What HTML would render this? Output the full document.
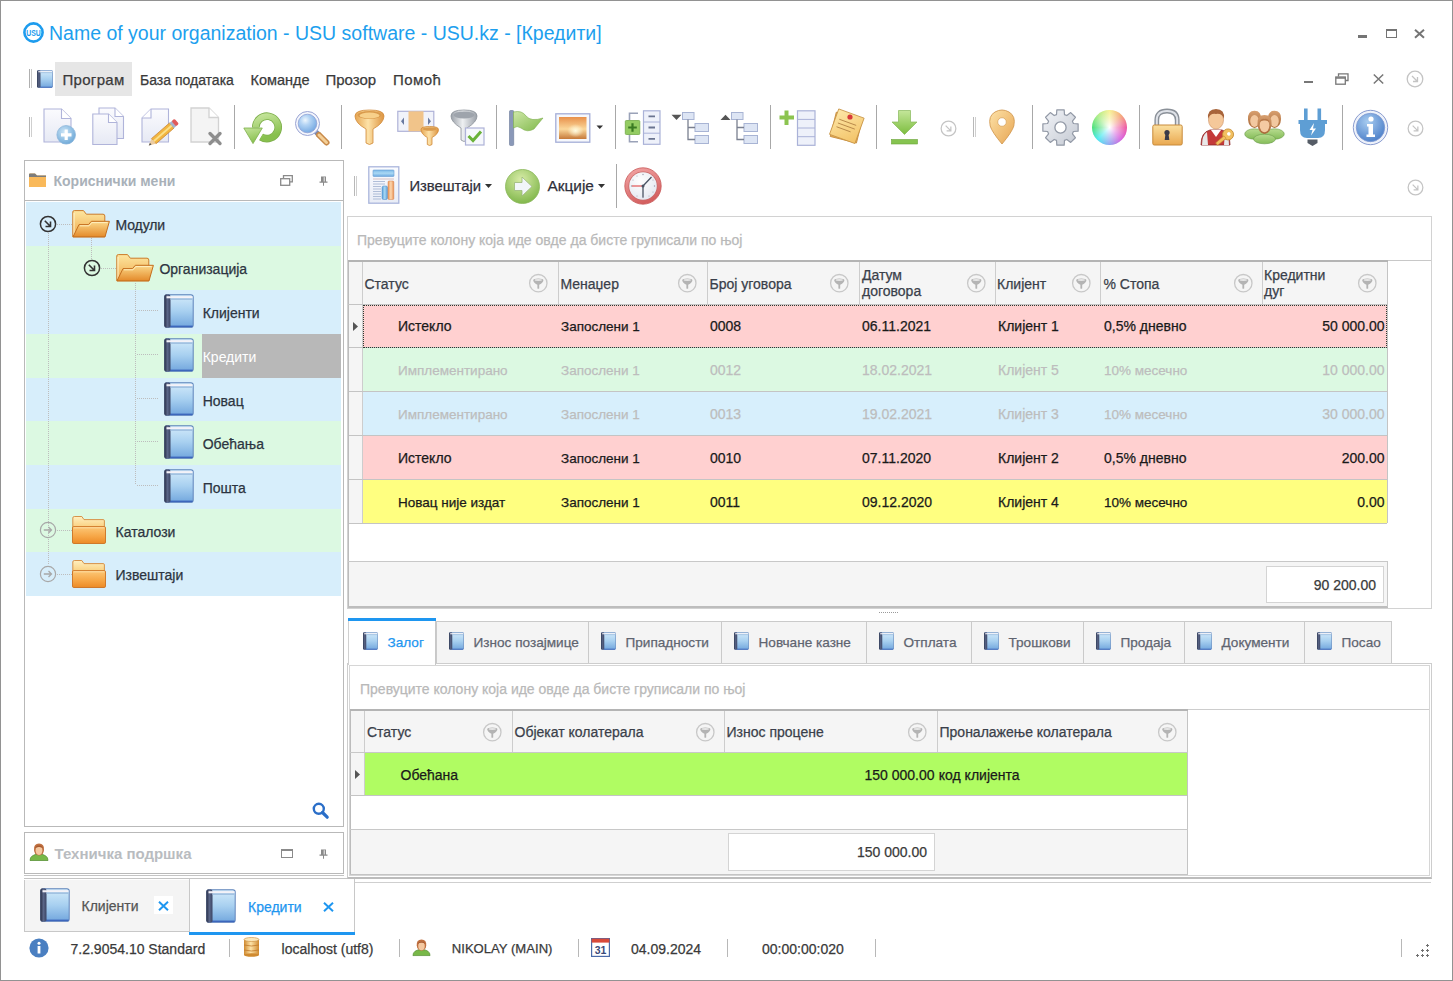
<!DOCTYPE html>
<html><head><meta charset="utf-8">
<style>
*{margin:0;padding:0;box-sizing:border-box}
html,body{width:1453px;height:981px;overflow:hidden;background:#fff}
body{position:relative;font-family:"Liberation Sans",sans-serif;font-size:14px;color:#333}
.a{position:absolute}
.t{position:absolute;white-space:nowrap;line-height:1;-webkit-text-stroke:0.25px currentColor}
.hl{position:absolute;height:1px}
.vl{position:absolute;width:1px}
svg.i{position:absolute;overflow:visible}
</style></head><body>
<svg width="0" height="0" style="position:absolute">
<defs>
 <linearGradient id="gBook" x1="0" y1="0" x2="0" y2="1">
  <stop offset="0" stop-color="#d2eafa"/><stop offset="0.5" stop-color="#a8d0f0"/><stop offset="1" stop-color="#74a8de"/>
 </linearGradient>
 <linearGradient id="gSpine" x1="0" y1="0" x2="1" y2="0">
  <stop offset="0" stop-color="#262c44"/><stop offset="0.5" stop-color="#5a6688"/><stop offset="1" stop-color="#3a4464"/>
 </linearGradient>
 <linearGradient id="gFold" x1="0" y1="0" x2="0" y2="1">
  <stop offset="0" stop-color="#fde6a0"/><stop offset="1" stop-color="#f0a94a"/>
 </linearGradient>
 <linearGradient id="gFoldF" x1="0" y1="0" x2="0" y2="1">
  <stop offset="0" stop-color="#fbd98a"/><stop offset="1" stop-color="#e48a2a"/>
 </linearGradient>
 <linearGradient id="gFoldC" x1="0" y1="0" x2="0" y2="1">
  <stop offset="0" stop-color="#fcc878"/><stop offset="0.55" stop-color="#f7a848"/><stop offset="1" stop-color="#ec8a26"/>
 </linearGradient>
 <linearGradient id="gFoldB" x1="0" y1="0" x2="0" y2="1">
  <stop offset="0" stop-color="#fff0c0"/><stop offset="1" stop-color="#f8c870"/>
 </linearGradient>
 <symbol id="book" viewBox="0 0 30 34" preserveAspectRatio="none">
  <rect x="0.3" y="0.3" width="29.4" height="33.4" rx="2.8" fill="#5c82ba"/>
  <rect x="1.3" y="1.3" width="27.4" height="31.4" rx="1.8" fill="url(#gBook)"/>
  <rect x="6" y="31.6" width="22.5" height="1.6" fill="#3c66bc"/>
  <rect x="0.3" y="0.3" width="6.2" height="33.4" rx="2.5" fill="url(#gSpine)"/>
  <rect x="2.5" y="2.2" width="26" height="2.1" fill="#f4f2f8"/>
  <rect x="6.5" y="4.3" width="22" height="1.6" fill="#9ebedf"/>
 </symbol>
 <symbol id="folderOpen" viewBox="0 0 38 28">
  <path d="M0.8 2 Q0.8 0.6 2.3 0.6 H11.5 L14.3 4.2 H31 Q32.8 4.2 32.8 6 V26.8 H0.8 Z" fill="url(#gFold)" stroke="#cc7a28" stroke-width="1"/>
  <path d="M2 3 V25" stroke="#fff6d0" stroke-width="1"/>
  <path d="M7 14.6 H16.5 L19.3 11.3 H37.4 L33 26.9 H1 Z" fill="url(#gFoldF)" stroke="#c46e1e" stroke-width="1" stroke-linejoin="round"/>
  <path d="M8 15.8 H17 L19.8 12.6 H35.6" fill="none" stroke="#fff0c0" stroke-width="1"/>
 </symbol>
 <symbol id="folderClosed" viewBox="0 0 34 28">
  <path d="M0.8 2 Q0.8 0.5 2.3 0.5 H9.8 L12 3.6 H31.2 Q32.4 3.6 32.4 4.8 V14 H0.8 Z" fill="url(#gFoldB)" stroke="#d4883a" stroke-width="0.9"/>
  <rect x="0.5" y="10.6" width="33" height="16.9" rx="1.3" fill="url(#gFoldC)" stroke="#cc7020" stroke-width="0.9"/>
  <path d="M1.5 11.8 H32.5" stroke="#ffe0a8" stroke-width="0.9"/>
 </symbol>
 <symbol id="filt" viewBox="0 0 20 20">
  <circle cx="10.3" cy="10.2" r="8.7" fill="none" stroke="#c8c8c8" stroke-width="1.3"/>
  <path d="M5.2 7.2 Q5.2 5.6 10.3 5.6 Q15.4 5.6 15.4 7.2 Q15.4 9.4 11.2 11.8 V15.4 Q10.3 16.2 9.4 15.4 V11.8 Q5.2 9.4 5.2 7.2 Z" fill="#b4b4b4"/>
  <ellipse cx="10.3" cy="7" rx="3.6" ry="0.9" fill="#e6e6e6"/>
 </symbol>
 <symbol id="expC" viewBox="0 0 18 18">
  <circle cx="9" cy="9" r="7.6" fill="none" stroke="#333" stroke-width="1.5"/>
  <path d="M5.8 5.8 L11.5 11.5 M6.5 11.5 H11.5 V6.5" fill="none" stroke="#333" stroke-width="1.6"/>
 </symbol>
 <symbol id="colC" viewBox="0 0 18 18">
  <circle cx="9" cy="9" r="7.6" fill="none" stroke="#a8a8a8" stroke-width="1.2"/>
  <path d="M4.8 9 H12.5 M9.5 6 L12.5 9 L9.5 12" fill="none" stroke="#a8a8a8" stroke-width="1.3"/>
 </symbol>
 <symbol id="smallC" viewBox="0 0 18 18">
  <circle cx="9" cy="9" r="7.8" fill="none" stroke="#c4c4c4" stroke-width="1.3"/>
  <path d="M6 6 L11.5 11.5 M7 11.5 H11.5 V7" fill="none" stroke="#c4c4c4" stroke-width="1.3"/>
 </symbol>
</defs>
</svg>

<!-- window border -->
<div class="a" style="left:0;top:0;width:1453px;height:981px;border:1px solid #929292"></div>

<!-- ===== TITLE BAR ===== -->
<svg class="i" style="left:23px;top:22px" width="21" height="21" viewBox="0 0 21 21">
 <circle cx="10.5" cy="10.5" r="9.1" fill="none" stroke="#1d9cee" stroke-width="2.6"/>
 <text x="10.5" y="13.6" font-family="Liberation Sans" font-size="8.6" font-weight="700" fill="#1d9cee" text-anchor="middle" textLength="14.5" lengthAdjust="spacingAndGlyphs">USU</text>
</svg>
<div class="t" style="left:49px;top:23.5px;font-size:19.5px;color:#1d9fee;-webkit-text-stroke:0">Name of your organization - USU software - USU.kz - [Кредити]</div>
<div class="a" style="left:1358px;top:35px;width:9px;height:2.5px;background:#747474"></div>
<div class="a" style="left:1385.5px;top:29px;width:11px;height:8.5px;border:1.4px solid #747474;border-top-width:2.2px"></div>
<svg class="i" style="left:1414px;top:28.5px" width="11" height="9.5" viewBox="0 0 11 9.5"><path d="M1 0.8 L10 8.7 M10 0.8 L1 8.7" stroke="#747474" stroke-width="2"/></svg>

<!-- ===== MENU BAR ===== -->
<div class="a" style="left:29px;top:69px;width:1px;height:19px;background:#b0b0b0"></div>
<div class="a" style="left:31px;top:69px;width:1px;height:19px;background:#c8c8c8"></div>
<svg class="i" style="left:37px;top:70px" width="16" height="18"><use href="#book"/></svg>
<div class="a" style="left:55px;top:62px;width:77px;height:34px;background:#e6e6e6"></div>
<div class="t" style="left:62.5px;top:72px;font-size:15px;letter-spacing:0.3px;color:#3a3a3a">Програм</div>
<div class="t" style="left:140px;top:72.5px;font-size:14px;color:#3a3a3a">База података</div>
<div class="t" style="left:250.5px;top:72.9px;font-size:14.5px;color:#3a3a3a">Команде</div>
<div class="t" style="left:325.5px;top:72px;font-size:15px;color:#3a3a3a">Прозор</div>
<div class="t" style="left:393px;top:72px;font-size:15px;letter-spacing:0.4px;color:#3a3a3a">Помоћ</div>
<div class="a" style="left:1304px;top:81px;width:9px;height:2px;background:#777"></div>
<svg class="i" style="left:1335px;top:73px" width="14" height="12" viewBox="0 0 14 12"><path d="M3.5 3.5 V0.8 H13 V7.5 H10.5" fill="none" stroke="#777" stroke-width="1.3"/><rect x="0.8" y="4" width="9.5" height="7.2" fill="none" stroke="#777" stroke-width="1.3"/><path d="M0.8 5 H10.3" stroke="#777" stroke-width="1.5"/></svg>
<svg class="i" style="left:1373px;top:74px" width="11" height="10" viewBox="0 0 11 10"><path d="M0.8 0.5 L10.2 9.5 M10.2 0.5 L0.8 9.5" stroke="#777" stroke-width="1.5"/></svg>
<svg class="i" style="left:1406px;top:70px" width="18" height="18"><use href="#smallC"/></svg>

<!-- ===== TOOLBAR ===== -->
<div class="a" style="left:29px;top:117px;width:1px;height:20px;background:#b8b8b8"></div>
<div class="a" style="left:31px;top:117px;width:1px;height:20px;background:#cfcfcf"></div>
<!-- new -->
<svg class="i" style="left:43px;top:108px" width="34" height="38" viewBox="0 0 34 38">
 <defs><linearGradient id="gDoc" x1="0" y1="0" x2="0" y2="1"><stop offset="0" stop-color="#fbfbfe"/><stop offset="1" stop-color="#e6e9f4"/></linearGradient>
 <radialGradient id="gPlus" cx="0.4" cy="0.35" r="0.7"><stop offset="0" stop-color="#cde6f7"/><stop offset="1" stop-color="#6aa6d6"/></radialGradient></defs>
 <path d="M1 1 H18.5 L28 10.5 V34 H1 Z" fill="url(#gDoc)" stroke="#b0b4da" stroke-width="1.1"/>
 <path d="M18.5 1 V10.5 H28" fill="#fff" stroke="#b0b4da" stroke-width="1.1"/>
 <circle cx="23.2" cy="26.8" r="9.3" fill="url(#gPlus)" stroke="#8fb8dc" stroke-width="0.8"/>
 <path d="M23.2 21.5 V32 M18 26.8 H28.5" stroke="#fff" stroke-width="3.2"/>
</svg>
<!-- copy -->
<svg class="i" style="left:92px;top:107px" width="33" height="39" viewBox="0 0 33 39">
 <path d="M7 1 H23 L31.5 9.5 V31.5 H7 Z" fill="url(#gDoc)" stroke="#b0b4da" stroke-width="1.1"/>
 <path d="M23 1 V9.5 H31.5" fill="#fff" stroke="#b0b4da" stroke-width="1.1"/>
 <path d="M0.8 7 H16.5 L25 15.5 V37.5 H0.8 Z" fill="url(#gDoc)" stroke="#b0b4da" stroke-width="1.1"/>
 <path d="M16.5 7 V15.5 H25" fill="#fff" stroke="#b0b4da" stroke-width="1.1"/>
</svg>
<!-- edit -->
<svg class="i" style="left:141px;top:108px" width="36" height="39" viewBox="0 0 36 39">
 <path d="M10 1 H27.5 V34 H1 V10 Z" fill="url(#gDoc)" stroke="#b0b4da" stroke-width="1.1"/>
 <path d="M10 1 V10 H1" fill="#fff" stroke="#b0b4da" stroke-width="1.1"/>
 <g transform="translate(21 26) rotate(49)">
  <rect x="-3.4" y="-13" width="6.8" height="24" fill="#f2b640" stroke="#c7802a" stroke-width="0.7"/>
  <rect x="-0.9" y="-13" width="1.8" height="24" fill="#fbe08a"/>
  <rect x="-3.4" y="-16" width="6.8" height="3.2" fill="#a4b4cc"/>
  <rect x="-3.4" y="-19.5" width="6.8" height="4" rx="1.4" fill="#e05a5a"/>
  <path d="M-3.4 11 L0 17.5 L3.4 11 Z" fill="#eccca0"/>
  <path d="M-1.2 14.9 L0 17.5 L1.2 14.9 Z" fill="#555"/>
 </g>
</svg>
<!-- delete -->
<svg class="i" style="left:190px;top:107px" width="34" height="40" viewBox="0 0 34 40">
 <path d="M1 1 H19 L28.5 10.5 V35 H1 Z" fill="#f4f4f4" stroke="#d2d2d2" stroke-width="1.3"/>
 <path d="M19 1 V10.5 H28.5" fill="#fff" stroke="#d2d2d2" stroke-width="1.3"/>
 <path d="M20 26.5 L30 36.5 M30 26.5 L20 36.5" stroke="#8e8e8e" stroke-width="3.4" stroke-linecap="round"/>
</svg>
<div class="a" style="left:234px;top:105px;width:1px;height:44px;background:#a8a8a8"></div>
<!-- refresh -->
<svg class="i" style="left:243px;top:110px" width="40" height="36" viewBox="0 0 40 36">
 <defs><linearGradient id="gGreen" x1="0" y1="0" x2="0.3" y2="1"><stop offset="0" stop-color="#c4e49a"/><stop offset="1" stop-color="#88c04e"/></linearGradient></defs>
 <path d="M12.8 17.4 A11.2 11.2 0 1 1 18.1 26.9" fill="none" stroke="#7cae4a" stroke-width="7.6"/>
 <path d="M12.8 17.4 A11.2 11.2 0 1 1 18.1 26.9" fill="none" stroke="url(#gGreen)" stroke-width="6"/>
 <path d="M0.8 18 L19.3 18 L10 33.6 Z" fill="url(#gGreen)" stroke="#7cae4a" stroke-width="0.8" stroke-linejoin="round"/>
</svg>
<!-- search -->
<svg class="i" style="left:294px;top:109px" width="36" height="37" viewBox="0 0 36 37">
 <defs><radialGradient id="gLens" cx="0.38" cy="0.32" r="0.75"><stop offset="0" stop-color="#eef6fd"/><stop offset="0.35" stop-color="#b4d4f4"/><stop offset="1" stop-color="#6ea4e0"/></radialGradient></defs>
 <path d="M21.5 22.5 L25 26" stroke="#7a8ab0" stroke-width="5" stroke-linecap="round"/>
 <path d="M25 26 L32.5 33.5" stroke="#c88a4a" stroke-width="6" stroke-linecap="round"/>
 <path d="M25 26 L32.5 33.5" stroke="#f4cf96" stroke-width="3" stroke-linecap="round"/>
 <circle cx="13.5" cy="14.5" r="12" fill="#f4f6fc" stroke="#9aa4d4" stroke-width="1"/>
 <circle cx="13.5" cy="14.5" r="9.3" fill="url(#gLens)" stroke="#8ea0d4" stroke-width="0.8"/>
</svg>
<div class="a" style="left:341px;top:105px;width:1px;height:44px;background:#a8a8a8"></div>
<!-- funnel gold -->
<svg class="i" style="left:354px;top:109px" width="31" height="37" viewBox="0 0 31 37">
 <defs><linearGradient id="gGold" x1="0" y1="0" x2="1" y2="0"><stop offset="0" stop-color="#e5a450"/><stop offset="0.45" stop-color="#fde2a8"/><stop offset="1" stop-color="#dd9440"/></linearGradient></defs>
 <path d="M1 7 Q1 1 15.5 1 Q30 1 30 7 Q30 14 19 20 V34 Q15.5 37 12 34 V20 Q1 14 1 7 Z" fill="url(#gGold)" stroke="#d08a3a" stroke-width="0.8"/>
 <ellipse cx="15.5" cy="6" rx="12" ry="4" fill="#d99a4c"/>
 <ellipse cx="15.5" cy="6.5" rx="10" ry="3" fill="#f7d08a"/>
</svg>
<!-- column filter -->
<svg class="i" style="left:397px;top:110px" width="42" height="37" viewBox="0 0 42 37">
 <rect x="0.8" y="1.3" width="36" height="20" fill="#f1f3fa" stroke="#aeb2d8" stroke-width="1.2"/>
 <rect x="11.5" y="1.3" width="15" height="20" fill="#f1c48a"/>
 <path d="M7 7.5 L4 11.3 L7 15 Z M31 7.5 L34 11.3 L31 15 Z" fill="#6a7aa0"/>
 <path d="M24 19.5 Q24 16.5 32.5 16.5 Q41.5 16.5 41.5 19.5 Q41.5 24 35 27.5 V34.5 Q32.7 36.5 30.3 34.5 V27.5 Q24 24 24 19.5 Z" fill="url(#gGold)" stroke="#d08a3a" stroke-width="0.8"/>
 <ellipse cx="32.7" cy="19" rx="6.8" ry="1.8" fill="#d99a4c"/>
</svg>
<!-- silver funnel check -->
<svg class="i" style="left:450px;top:109px" width="35" height="37" viewBox="0 0 35 37">
 <defs><linearGradient id="gSil" x1="0" y1="0" x2="1" y2="0"><stop offset="0" stop-color="#9aa0a8"/><stop offset="0.45" stop-color="#eef0f2"/><stop offset="1" stop-color="#9aa0a8"/></linearGradient></defs>
 <path d="M1 7 Q1 1 14 1 Q27 1 27 7 Q27 13 17 19 V31 Q14 34 11 31 V19 Q1 13 1 7 Z" fill="url(#gSil)" stroke="#8a9098" stroke-width="0.8"/>
 <ellipse cx="14" cy="6" rx="10.5" ry="3.5" fill="#9ea4ac"/>
 <rect x="15.5" y="19" width="18.5" height="17" fill="#f6f8fc" stroke="#aeb2d8" stroke-width="1.2"/>
 <path d="M18.5 27 L23 31.5 L31 22.5" fill="none" stroke="#6ab23a" stroke-width="3"/>
</svg>
<div class="a" style="left:496px;top:105px;width:1px;height:44px;background:#a8a8a8"></div>
<!-- flag -->
<svg class="i" style="left:508px;top:110px" width="36" height="36" viewBox="0 0 36 36">
 <defs><linearGradient id="gFlag" x1="0" y1="0" x2="1" y2="1"><stop offset="0" stop-color="#cfe8a8"/><stop offset="1" stop-color="#7fb84a"/></linearGradient></defs>
 <rect x="1.5" y="0.5" width="4.2" height="35" rx="1" fill="#8a98b8" stroke="#6a7898" stroke-width="0.6"/>
 <path d="M5.5 2 Q14 0 18 6 Q23 12 35 8 Q30 14 26 19 Q19 23 13 18 Q9 15 5.5 18 Z" fill="url(#gFlag)" stroke="#7aac4a" stroke-width="0.6"/>
</svg>
<!-- picture -->
<svg class="i" style="left:555px;top:113px" width="49" height="30" viewBox="0 0 49 30">
 <defs><linearGradient id="gPic" x1="0" y1="0" x2="0" y2="1"><stop offset="0" stop-color="#e8904a"/><stop offset="0.55" stop-color="#fbd79a"/><stop offset="1" stop-color="#c67a3a"/></linearGradient>
 <radialGradient id="gSun" cx="0.6" cy="0.62" r="0.3"><stop offset="0" stop-color="#fffbe0"/><stop offset="1" stop-color="#fffbe0" stop-opacity="0"/></radialGradient></defs>
 <rect x="0.8" y="0.8" width="34" height="28.4" fill="#f6f8fc" stroke="#a4aed8" stroke-width="1.3"/>
 <rect x="4" y="4" width="27.5" height="22" fill="url(#gPic)"/>
 <rect x="4" y="4" width="27.5" height="22" fill="url(#gSun)"/>
 <path d="M41.5 12.5 H48 L44.75 16 Z" fill="#333"/>
</svg>
<div class="a" style="left:615px;top:105px;width:1px;height:44px;background:#a8a8a8"></div>
<!-- plus list -->
<svg class="i" style="left:624px;top:110px" width="37" height="36" viewBox="0 0 37 36">
 <path d="M14 3.3 H5.5 V10 M5.5 24.5 V31.7 H14" fill="none" stroke="#9aa2b8" stroke-width="1.6"/>
 <rect x="1.3" y="10.5" width="14.5" height="14" rx="1" fill="#94cc62" stroke="#72aa48" stroke-width="0.8"/>
 <path d="M8.5 13.2 V21.8 M4.2 17.5 H12.8" stroke="#3a7a22" stroke-width="2.2"/>
 <rect x="19.5" y="0.8" width="16.5" height="33.5" fill="#eef1fa" stroke="#aab2d8" stroke-width="1.2"/>
 <path d="M19.5 12 H36 M19.5 23.2 H36" stroke="#aab2d8" stroke-width="1"/>
 <path d="M24.5 6.3 H31 M24.5 17.5 H31 M24.5 28.8 H31" stroke="#6a7490" stroke-width="1.8"/>
</svg>
<!-- tree expand -->
<svg class="i" style="left:671px;top:112px" width="39" height="33" viewBox="0 0 39 33">
 <path d="M0.5 2.8 H10.5 L5.5 8 Z" fill="#555"/>
 <rect x="11.5" y="0.5" width="11.5" height="7" fill="#dde5f4" stroke="#a8b4d4" stroke-width="1"/>
 <rect x="24" y="11.5" width="13.5" height="8" fill="#dde5f4" stroke="#a8b4d4" stroke-width="1"/>
 <rect x="24" y="23.5" width="13.5" height="8" fill="#dde5f4" stroke="#a8b4d4" stroke-width="1"/>
 <path d="M17 7.5 V27.5 H24 M17 15.5 H24" fill="none" stroke="#7a8090" stroke-width="1.3"/>
</svg>
<!-- tree collapse -->
<svg class="i" style="left:720px;top:112px" width="39" height="33" viewBox="0 0 39 33">
 <path d="M0.5 8 H10.5 L5.5 2.8 Z" fill="#555"/>
 <rect x="11.5" y="0.5" width="11.5" height="7" fill="#dde5f4" stroke="#a8b4d4" stroke-width="1"/>
 <rect x="24" y="11.5" width="13.5" height="8" fill="#dde5f4" stroke="#a8b4d4" stroke-width="1"/>
 <rect x="24" y="23.5" width="13.5" height="8" fill="#dde5f4" stroke="#a8b4d4" stroke-width="1"/>
 <path d="M17 7.5 V27.5 H24 M17 15.5 H24" fill="none" stroke="#7a8090" stroke-width="1.3"/>
</svg>
<div class="a" style="left:770px;top:105px;width:1px;height:44px;background:#a8a8a8"></div>
<!-- plus rows -->
<svg class="i" style="left:779px;top:110px" width="37" height="36" viewBox="0 0 37 36">
 <path d="M7.5 0.5 V15 M0.5 7.5 H15" stroke="#8cc450" stroke-width="4"/>
 <rect x="18.5" y="0.8" width="17.5" height="34.5" fill="#eef1fa" stroke="#aab2d8" stroke-width="1.2"/>
 <path d="M18.5 9.4 H36 M18.5 18 H36 M18.5 26.7 H36" stroke="#aab2d8" stroke-width="1"/>
</svg>
<!-- sticky notes -->
<svg class="i" style="left:828px;top:109px" width="37" height="37" viewBox="0 0 37 37">
 <defs><linearGradient id="gNote" x1="0" y1="0" x2="1" y2="1"><stop offset="0" stop-color="#fde7a8"/><stop offset="1" stop-color="#f3c266"/></linearGradient></defs>
 <g transform="rotate(14 18 18)">
  <rect x="5" y="6" width="27" height="25" fill="#e8b05a" stroke="#c48a3a" stroke-width="0.8"/>
 </g>
 <g transform="rotate(20 18 18)">
  <rect x="5" y="3.5" width="27" height="27" fill="url(#gNote)" stroke="#c89446" stroke-width="0.8"/>
  <path d="M9 13 H27 M9 17 H27 M9 21 H24" stroke="#b98a4a" stroke-width="0.9"/>
 </g>
 <circle cx="22" cy="8" r="2.6" fill="#d83a3a"/>
</svg>
<div class="a" style="left:876px;top:105px;width:1px;height:44px;background:#a8a8a8"></div>
<!-- download -->
<svg class="i" style="left:891px;top:110px" width="27" height="35" viewBox="0 0 27 35">
 <defs><linearGradient id="gDl" x1="0" y1="0" x2="0" y2="1"><stop offset="0" stop-color="#c4e69a"/><stop offset="1" stop-color="#7cbd3e"/></linearGradient></defs>
 <path d="M7.5 0.5 H19.5 V12 H26 L13.5 24.5 L1 12 H7.5 Z" fill="url(#gDl)" stroke="#86b85a" stroke-width="0.7"/>
 <rect x="0.5" y="29.5" width="26" height="4.5" fill="#86c450" stroke="#6aa438" stroke-width="0.6"/>
</svg>
<svg class="i" style="left:940px;top:120px" width="17" height="17"><use href="#smallC"/></svg>
<div class="a" style="left:973px;top:117px;width:1px;height:20px;background:#b8b8b8"></div>
<div class="a" style="left:975px;top:117px;width:1px;height:20px;background:#cfcfcf"></div>
<!-- pin -->
<svg class="i" style="left:989px;top:110px" width="27" height="35" viewBox="0 0 27 35">
 <defs><linearGradient id="gPin" x1="0" y1="0" x2="1" y2="1"><stop offset="0" stop-color="#fde2a8"/><stop offset="1" stop-color="#e7a552"/></linearGradient></defs>
 <path d="M13 34 Q3 22 1.2 16 Q-1 6 6 2 Q13 -2 20 2 Q27 6 24.8 16 Q23 22 13 34 Z" fill="url(#gPin)" stroke="#d39a52" stroke-width="0.9"/>
 <circle cx="13" cy="12" r="4.3" fill="#fff" stroke="#d9a866" stroke-width="0.8"/>
</svg>
<div class="a" style="left:1032px;top:105px;width:1px;height:44px;background:#a8a8a8"></div>
<!-- gear -->
<svg class="i" style="left:1041px;top:108px" width="39" height="39" viewBox="0 0 39 39">
 <defs><linearGradient id="gGear" x1="0" y1="0" x2="1" y2="1"><stop offset="0" stop-color="#f2f4f8"/><stop offset="1" stop-color="#c4c9d2"/></linearGradient></defs>
 <path d="M15.51 5.60 L15.82 0.87 L23.18 0.87 L23.49 5.60 L25.80 6.56 L29.72 3.58 L34.42 8.28 L31.44 12.20 L32.40 14.51 L37.13 14.82 L37.13 22.18 L32.40 22.49 L31.44 24.80 L34.42 28.72 L29.72 33.42 L25.80 30.44 L23.49 31.40 L23.18 36.13 L15.82 36.13 L15.51 31.40 L13.20 30.44 L9.28 33.42 L4.58 28.72 L7.56 24.80 L6.60 22.49 L1.87 22.18 L1.87 14.82 L6.60 14.51 L7.56 12.20 L4.58 8.28 L9.28 3.58 L13.20 6.56 Z" transform="translate(0 1)" fill="url(#gGear)" stroke="#9299a6" stroke-width="1.2" stroke-linejoin="round"/>
 <circle cx="19.5" cy="19.5" r="5.6" fill="#fff" stroke="#9299a6" stroke-width="1.3"/>
</svg>
<!-- color wheel -->
<div class="a" style="left:1092px;top:110px;width:35px;height:35px;border-radius:50%;background:radial-gradient(circle at 50% 50%,rgba(255,255,255,1) 0,rgba(255,255,255,0.55) 30%,rgba(255,255,255,0) 75%),conic-gradient(from 0deg,#f6f08a,#f4a070 45deg,#ec4c9c 90deg,#d456dc 135deg,#8aa0f0 180deg,#3ee8f0 225deg,#3ede70 270deg,#a8ec80 315deg,#f6f08a 360deg)"></div>
<div class="a" style="left:1139px;top:105px;width:1px;height:44px;background:#a8a8a8"></div>
<!-- lock -->
<svg class="i" style="left:1152px;top:109px" width="31" height="37" viewBox="0 0 31 37">
 <defs><linearGradient id="gLock" x1="0" y1="0" x2="0" y2="1"><stop offset="0" stop-color="#fbe0a0"/><stop offset="1" stop-color="#e9a850"/></linearGradient></defs>
 <path d="M4.8 17 V11 Q4.8 2 15 2 Q25.2 2 25.2 11 V17" fill="none" stroke="#8a9098" stroke-width="4.8"/>
 <path d="M4.8 17 V11 Q4.8 2 15 2 Q25.2 2 25.2 11 V17" fill="none" stroke="#dfe2e8" stroke-width="2"/>
 <rect x="0.8" y="16" width="29.4" height="20" rx="1.5" fill="url(#gLock)" stroke="#c88a3a" stroke-width="1"/>
 <circle cx="15" cy="23.5" r="2.6" fill="#3a3a48"/>
 <path d="M13.6 24 H16.4 L17.3 31 H12.7 Z" fill="#3a3a48"/>
</svg>
<!-- person key -->
<svg class="i" style="left:1199px;top:107px" width="37" height="39" viewBox="0 0 37 39">
 <path d="M2 38 Q2 25 11 23 H23 Q31 25 31 38 Z" fill="#c43a3a" stroke="#8a2a2a" stroke-width="0.8"/>
 <path d="M12 23 L17 30 L22 23 Z" fill="#fff"/>
 <path d="M3 38 Q3 28 8 25 L9 38 Z M30 38 Q30 28 26 25 L25 38 Z" fill="#e8e8e8"/>
 <ellipse cx="17" cy="13" rx="7.5" ry="9" fill="#f5c89a" stroke="#c98a5a" stroke-width="0.6"/>
 <path d="M9 12 Q8 2 17 2 Q26 2 25 12 Q23 6 17 7 Q11 6 9 12 Z" fill="#a8643a"/>
 <g transform="rotate(-40 26 30)">
  <circle cx="30" cy="30" r="5.5" fill="#f2c060" stroke="#c48a30" stroke-width="0.8"/>
  <circle cx="31" cy="30" r="1.8" fill="#fff"/>
  <rect x="15" y="28.5" width="11" height="3.2" fill="#f2c060" stroke="#c48a30" stroke-width="0.6"/>
 </g>
</svg>
<!-- group -->
<svg class="i" style="left:1244px;top:110px" width="41" height="34" viewBox="0 0 41 34">
 <defs><linearGradient id="gBody" x1="0" y1="0" x2="0" y2="1"><stop offset="0" stop-color="#b8dc90"/><stop offset="1" stop-color="#84bc58"/></linearGradient>
 <linearGradient id="gHair" x1="0" y1="0" x2="0" y2="1"><stop offset="0" stop-color="#d8a070"/><stop offset="1" stop-color="#a86838"/></linearGradient></defs>
 <g stroke="#6a9a4a" stroke-width="0.6" fill="url(#gBody)">
  <ellipse cx="10.5" cy="24" rx="9.8" ry="5.2"/><ellipse cx="30.5" cy="24" rx="9.8" ry="5.2"/>
 </g>
 <g><path d="M4 9.5 Q3.5 0.8 10.5 0.8 Q17.5 0.8 17 9.5 Q16.5 17 10.5 18 Q4.5 17 4 9.5 Z" fill="url(#gHair)"/><ellipse cx="10.5" cy="11" rx="4.3" ry="6" fill="#f2c8a0"/>
 <path d="M24 9.5 Q23.5 0.8 30.5 0.8 Q37.5 0.8 37 9.5 Q36.5 17 30.5 18 Q24.5 17 24 9.5 Z" fill="url(#gHair)"/><ellipse cx="30.5" cy="11" rx="4.3" ry="6" fill="#f2c8a0"/></g>
 <ellipse cx="20.5" cy="29" rx="11" ry="4.8" fill="url(#gBody)" stroke="#6a9a4a" stroke-width="0.6"/>
 <path d="M13.5 14 Q13 5 20.5 5 Q28 5 27.5 14 Q27 23 20.5 24 Q14 23 13.5 14 Z" fill="url(#gHair)"/>
 <ellipse cx="20.5" cy="15.5" rx="4.8" ry="6.8" fill="#f4caa2"/>
 <path d="M15.5 12 Q17 8.5 20.5 8.8 Q24 8.5 25.5 12 Q23 10.2 20.5 10.5 Q18 10.2 15.5 12 Z" fill="#b87848"/>
</svg>
<!-- plug -->
<svg class="i" style="left:1298px;top:108px" width="30" height="39" viewBox="0 0 30 39">
 <rect x="6" y="0.5" width="3.6" height="12" fill="#5e9ed4"/>
 <rect x="19.5" y="0.5" width="3.6" height="12" fill="#5e9ed4"/>
 <path d="M0.5 12 H29 V16 H27 V22 Q27 30 20 30 H9 Q2 30 2 22 V16 H0.5 Z" fill="#5e9ed4"/>
 <path d="M16 15 L11.5 22 H14.5 L13 27.5 L18 20.5 H15 Z" fill="#fff"/>
 <path d="M9.5 31.5 H19.5 V35 L14.5 38 L9.5 35 Z" fill="#555c66"/>
</svg>
<div class="a" style="left:1342px;top:105px;width:1px;height:45px;background:#a8a8a8"></div>
<!-- info -->
<svg class="i" style="left:1352px;top:109px" width="37" height="37" viewBox="0 0 37 37">
 <defs><radialGradient id="gInfo" cx="0.4" cy="0.3" r="0.75"><stop offset="0" stop-color="#a8ccf0"/><stop offset="1" stop-color="#4a7ec8"/></radialGradient></defs>
 <circle cx="18.5" cy="18.5" r="17.2" fill="#eef2fa" stroke="#8a9cd0" stroke-width="1"/>
 <circle cx="18.5" cy="18.5" r="14.2" fill="url(#gInfo)" stroke="#7e98d0" stroke-width="0.8"/>
 <circle cx="19" cy="10" r="2.6" fill="#fff"/>
 <path d="M15 15 H21 V25.5 H23 V28 H14.5 V25.5 H16.5 V17.5 H15 Z" fill="#fff"/>
</svg>
<svg class="i" style="left:1407px;top:120px" width="17" height="17"><use href="#smallC"/></svg>

<div id="leftpanel"></div>
<!-- ===== LEFT PANEL ===== -->
<div class="a" style="left:24px;top:160px;width:320px;height:667px;border:1px solid #b9b9b9"></div>
<div class="a" style="left:24px;top:200px;width:320px;height:1px;background:#b9b9b9"></div>
<svg class="i" style="left:28px;top:173px" width="19" height="15" viewBox="0 0 19 15"><path d="M1 1.5 Q1 0.5 2 0.5 H7 L9 2.5 H18 V14 H1 Z" fill="#f9b95a"/><path d="M1 1.5 Q1 0.5 2 0.5 H7 L9 2.5 H18 V4 H1 Z" fill="#7c7c7c"/></svg>
<div class="t" style="left:53.5px;top:173.95px;font-size:14px;font-weight:700;color:#a9b1b9;-webkit-text-stroke:0">Кориснички мени</div>
<svg class="i" style="left:280px;top:175px" width="13" height="11" viewBox="0 0 13 11"><path d="M3.5 3 V0.7 H12.3 V6.8 H10" fill="none" stroke="#8a8a8a" stroke-width="1.3"/><rect x="0.7" y="3.7" width="9" height="6.6" fill="none" stroke="#8a8a8a" stroke-width="1.3"/></svg>
<svg class="i" style="left:319px;top:176px" width="9" height="10" viewBox="0 0 9 10"><path d="M2 0.5 H7 V5.5 H8.5 V6.8 H5 V9.8 H4 V6.8 H0.5 V5.5 H2 Z" fill="#8a8a8a"/><path d="M5.2 1.2 V5.5" stroke="#fff" stroke-width="0.9"/></svg>
<div class="a" style="left:26px;top:202px;width:315px;height:44px;background:#d7eefb"></div>
<div class="a" style="left:26px;top:246px;width:315px;height:44px;background:#dcf9e2"></div>
<div class="a" style="left:26px;top:290px;width:315px;height:44px;background:#d7eefb"></div>
<div class="a" style="left:26px;top:334px;width:315px;height:44px;background:#dcf9e2"></div>
<div class="a" style="left:26px;top:378px;width:315px;height:43px;background:#d7eefb"></div>
<div class="a" style="left:26px;top:421px;width:315px;height:44px;background:#dcf9e2"></div>
<div class="a" style="left:26px;top:465px;width:315px;height:44px;background:#d7eefb"></div>
<div class="a" style="left:26px;top:509px;width:315px;height:43px;background:#dcf9e2"></div>
<div class="a" style="left:26px;top:552px;width:315px;height:44px;background:#d7eefb"></div>
<div class="a" style="left:202px;top:334px;width:139px;height:44px;background:#b8b8b8"></div>
<div class="a" style="left:48px;top:233px;width:1px;height:331px;background:repeating-linear-gradient(#bdbdbd 0 1px,transparent 1px 2px)"></div>
<div class="a" style="left:57px;top:224px;width:15px;height:1px;background:repeating-linear-gradient(90deg,#bdbdbd 0 1px,transparent 1px 2px)"></div>
<div class="a" style="left:91px;top:238px;width:1px;height:22px;background:repeating-linear-gradient(#bdbdbd 0 1px,transparent 1px 2px)"></div>
<div class="a" style="left:101px;top:268px;width:15px;height:1px;background:repeating-linear-gradient(90deg,#bdbdbd 0 1px,transparent 1px 2px)"></div>
<div class="a" style="left:135px;top:283px;width:1px;height:202px;background:repeating-linear-gradient(#bdbdbd 0 1px,transparent 1px 2px)"></div>
<div class="a" style="left:137px;top:310px;width:21px;height:1px;background:repeating-linear-gradient(90deg,#bdbdbd 0 1px,transparent 1px 2px)"></div>
<div class="a" style="left:137px;top:354px;width:21px;height:1px;background:repeating-linear-gradient(90deg,#bdbdbd 0 1px,transparent 1px 2px)"></div>
<div class="a" style="left:137px;top:398px;width:21px;height:1px;background:repeating-linear-gradient(90deg,#bdbdbd 0 1px,transparent 1px 2px)"></div>
<div class="a" style="left:137px;top:441px;width:21px;height:1px;background:repeating-linear-gradient(90deg,#bdbdbd 0 1px,transparent 1px 2px)"></div>
<div class="a" style="left:137px;top:485px;width:21px;height:1px;background:repeating-linear-gradient(90deg,#bdbdbd 0 1px,transparent 1px 2px)"></div>
<div class="a" style="left:57px;top:530px;width:15px;height:1px;background:repeating-linear-gradient(90deg,#bdbdbd 0 1px,transparent 1px 2px)"></div>
<div class="a" style="left:57px;top:574px;width:15px;height:1px;background:repeating-linear-gradient(90deg,#bdbdbd 0 1px,transparent 1px 2px)"></div>
<svg class="i" style="left:39px;top:215px" width="18" height="18"><use href="#expC"/></svg>
<svg class="i" style="left:83px;top:259px" width="18" height="18"><use href="#expC"/></svg>
<svg class="i" style="left:39px;top:521px" width="18" height="18"><use href="#colC"/></svg>
<svg class="i" style="left:39px;top:565px" width="18" height="18"><use href="#colC"/></svg>
<svg class="i" style="left:72px;top:210px" width="38" height="28"><use href="#folderOpen"/></svg>
<svg class="i" style="left:116px;top:254px" width="38" height="28"><use href="#folderOpen"/></svg>
<svg class="i" style="left:72px;top:516px" width="34" height="28"><use href="#folderClosed"/></svg>
<svg class="i" style="left:72px;top:560px" width="34" height="28"><use href="#folderClosed"/></svg>
<div class="t" style="left:115.5px;top:218.45px;font-size:14px;color:#2c3440;letter-spacing:-0.1px">Модули</div>
<div class="t" style="left:159.4px;top:262.35px;font-size:14px;color:#2c3440">Организација</div>
<svg class="i" style="left:164px;top:294px" width="30" height="34"><use href="#book"/></svg>
<div class="t" style="left:202.7px;top:305.75px;font-size:14px;color:#2c3440">Клијенти</div>
<svg class="i" style="left:164px;top:338px" width="30" height="34"><use href="#book"/></svg>
<div class="t" style="left:202.7px;top:349.75px;font-size:14px;color:#ffffff;-webkit-text-stroke:0">Кредити</div>
<svg class="i" style="left:164px;top:382px" width="30" height="34"><use href="#book"/></svg>
<div class="t" style="left:202.7px;top:393.75px;font-size:14px;color:#2c3440">Новац</div>
<svg class="i" style="left:164px;top:425px" width="30" height="34"><use href="#book"/></svg>
<div class="t" style="left:202.7px;top:436.75px;font-size:14px;color:#2c3440">Обећања</div>
<svg class="i" style="left:164px;top:469px" width="30" height="34"><use href="#book"/></svg>
<div class="t" style="left:202.7px;top:480.75px;font-size:14px;color:#2c3440">Пошта</div>
<div class="t" style="left:115.5px;top:524.55px;font-size:14px;color:#2c3440">Каталози</div>
<div class="t" style="left:115.5px;top:568.35px;font-size:14px;color:#2c3440">Извештаји</div>
<svg class="i" style="left:312px;top:802px" width="17" height="17" viewBox="0 0 17 17"><circle cx="6.8" cy="6.8" r="5" fill="none" stroke="#2a6ec8" stroke-width="2.4"/><path d="M10.5 10.5 L15.2 15.2" stroke="#2a6ec8" stroke-width="3.2" stroke-linecap="round"/></svg>
<!-- support panel -->
<div class="a" style="left:24px;top:832px;width:320px;height:42px;border:1px solid #b9b9b9"></div>
<div class="a" style="left:24px;top:875px;width:320px;height:1px;background:#c4c4c4"></div>
<svg class="i" style="left:29px;top:843px" width="20" height="18" viewBox="0 0 20 18"><path d="M1 17.5 Q1 11.5 10 11 Q19 11.5 19 17.5 Z" fill="#78b848" stroke="#4e8a2a" stroke-width="0.7"/><path d="M5 7 Q4.5 0.5 10 0.5 Q15.5 0.5 15 7 Q14.5 11 12 12 L10 12.5 L8 12 Q5.5 11 5 7 Z" fill="#c07040"/><ellipse cx="10" cy="7.3" rx="3.4" ry="4.6" fill="#f4c8a0"/><path d="M6 5.5 Q7 2.2 10 2.3 Q13 2.2 14 5.5 Q12 3.8 10 4 Q8 3.8 6 5.5 Z" fill="#a85a30"/></svg>
<div class="t" style="left:54.5px;top:846.1px;font-size:15px;font-weight:700;color:#b9bcc0;-webkit-text-stroke:0">Техничка подршка</div>
<div class="a" style="left:281px;top:849px;width:12px;height:9px;border:1.3px solid #8a8a8a;border-top-width:2px"></div>
<svg class="i" style="left:319px;top:849px" width="9" height="10" viewBox="0 0 9 10"><path d="M2 0.5 H7 V5.5 H8.5 V6.8 H5 V9.8 H4 V6.8 H0.5 V5.5 H2 Z" fill="#8a8a8a"/><path d="M5.2 1.2 V5.5" stroke="#fff" stroke-width="0.9"/></svg>
<!-- bottom document tabs -->
<div class="a" style="left:24px;top:878px;width:1408px;height:1px;background:#c4c4c4"></div>
<div class="a" style="left:354px;top:882px;width:1077px;height:1px;background:#cfcfcf"></div>
<div class="a" style="left:24px;top:880px;width:166px;height:52px;background:#f4f4f4;border:1px solid #c8c8c8;border-top:none"></div>
<div class="a" style="left:189px;top:879px;width:166px;height:54px;background:#fff;border-left:1px solid #c8c8c8;border-right:1px solid #c8c8c8"></div>
<div class="a" style="left:189px;top:932px;width:166px;height:3px;background:#1e96f0"></div>
<svg class="i" style="left:40px;top:888px" width="30" height="34"><use href="#book"/></svg>
<div class="t" style="left:81.5px;top:899.45px;font-size:14px;color:#555">Клијенти</div>
<div class="a" style="left:154px;top:896px;width:19px;height:18px;background:#fff"></div>
<svg class="i" style="left:157.5px;top:900.5px" width="11" height="10" viewBox="0 0 11 10"><path d="M1 0.8 L10 9.2 M10 0.8 L1 9.2" stroke="#1e96f0" stroke-width="2"/></svg>
<svg class="i" style="left:206px;top:889px" width="30" height="34"><use href="#book"/></svg>
<div class="t" style="left:248px;top:900.45px;font-size:14px;color:#1e96f0">Кредити</div>
<svg class="i" style="left:322.5px;top:902px" width="11" height="10" viewBox="0 0 11 10"><path d="M1 0.8 L10 9.2 M10 0.8 L1 9.2" stroke="#1e96f0" stroke-width="2"/></svg>
<!-- status bar -->
<svg class="i" style="left:29px;top:937.5px" width="20" height="20" viewBox="0 0 20 20"><circle cx="10" cy="10" r="9.6" fill="#4a7fc1"/><rect x="8.6" y="8" width="2.8" height="7.5" fill="#fff"/><circle cx="10" cy="5.3" r="1.5" fill="#fff"/></svg>
<div class="t" style="left:70.5px;top:941.55px;font-size:14px;color:#3a3a3a">7.2.9054.10 Standard</div>
<div class="a" style="left:229px;top:939px;width:1px;height:18px;background:#b8b8b8"></div>
<div class="a" style="left:399px;top:939px;width:1px;height:18px;background:#b8b8b8"></div>
<div class="a" style="left:578px;top:939px;width:1px;height:18px;background:#b8b8b8"></div>
<div class="a" style="left:727px;top:939px;width:1px;height:18px;background:#b8b8b8"></div>
<div class="a" style="left:875px;top:939px;width:1px;height:18px;background:#b8b8b8"></div>
<div class="a" style="left:1401px;top:939px;width:1px;height:18px;background:#b8b8b8"></div>
<svg class="i" style="left:243px;top:937px" width="17" height="20" viewBox="0 0 17 20"><defs><linearGradient id="gDb" x1="0" x2="1"><stop offset="0" stop-color="#d08a30"/><stop offset="0.45" stop-color="#fde3a8"/><stop offset="1" stop-color="#d08a30"/></linearGradient></defs><rect x="1" y="2.5" width="15" height="15.5" fill="url(#gDb)"/><ellipse cx="8.5" cy="18" rx="7.5" ry="1.8" fill="#d08a30"/><ellipse cx="8.5" cy="2.5" rx="7.5" ry="2" fill="#fbe6b8" stroke="#c88a3a" stroke-width="0.6"/><path d="M1 8 Q8.5 10 16 8 M1 13 Q8.5 15 16 13" fill="none" stroke="#c27a2a" stroke-width="0.8"/></svg>
<div class="t" style="left:281.6px;top:941.55px;font-size:14px;color:#3a3a3a">localhost (utf8)</div>
<svg class="i" style="left:412px;top:938px" width="19" height="19" viewBox="0 0 20 18"><path d="M1 17.5 Q1 11.5 10 11 Q19 11.5 19 17.5 Z" fill="#78b848" stroke="#4e8a2a" stroke-width="0.7"/><path d="M5 7 Q4.5 0.5 10 0.5 Q15.5 0.5 15 7 Q14.5 11 12 12 L10 12.5 L8 12 Q5.5 11 5 7 Z" fill="#c07040"/><ellipse cx="10" cy="7.3" rx="3.4" ry="4.6" fill="#f4c8a0"/><path d="M6 5.5 Q7 2.2 10 2.3 Q13 2.2 14 5.5 Q12 3.8 10 4 Q8 3.8 6 5.5 Z" fill="#a85a30"/></svg>
<div class="t" style="left:451.8px;top:942.31px;font-size:13.1px;color:#3a3a3a">NIKOLAY (MAIN)</div>
<svg class="i" style="left:591px;top:938px" width="19" height="19" viewBox="0 0 19 19"><rect x="0.6" y="0.6" width="17.8" height="17.8" fill="#fff" stroke="#4a6aa8" stroke-width="1.2"/><rect x="0.6" y="0.6" width="17.8" height="4" fill="#d84a3a"/><text x="9.5" y="16" font-family="Liberation Sans" font-size="10.5" font-weight="700" fill="#3a4a7a" text-anchor="middle">31</text></svg>
<div class="t" style="left:631px;top:941.55px;font-size:14px;color:#3a3a3a">04.09.2024</div>
<div class="t" style="left:762px;top:941.55px;font-size:14px;color:#3a3a3a">00:00:00:020</div>
<div class="a" style="left:1426px;top:945px;width:3px;height:1px;background:#707070"></div>
<div class="a" style="left:1427px;top:944px;width:1px;height:3px;background:#707070"></div>
<div class="a" style="left:1421px;top:950px;width:3px;height:1px;background:#707070"></div>
<div class="a" style="left:1422px;top:949px;width:1px;height:3px;background:#707070"></div>
<div class="a" style="left:1426px;top:950px;width:3px;height:1px;background:#707070"></div>
<div class="a" style="left:1427px;top:949px;width:1px;height:3px;background:#707070"></div>
<div class="a" style="left:1416px;top:955px;width:3px;height:1px;background:#707070"></div>
<div class="a" style="left:1417px;top:954px;width:1px;height:3px;background:#707070"></div>
<div class="a" style="left:1421px;top:955px;width:3px;height:1px;background:#707070"></div>
<div class="a" style="left:1422px;top:954px;width:1px;height:3px;background:#707070"></div>
<div class="a" style="left:1426px;top:955px;width:3px;height:1px;background:#707070"></div>
<div class="a" style="left:1427px;top:954px;width:1px;height:3px;background:#707070"></div>
<div id="main"></div>
<!-- ===== MAIN AREA ===== -->
<div class="a" style="left:354px;top:176px;width:1px;height:20px;background:#b8b8b8"></div>
<div class="a" style="left:356px;top:176px;width:1px;height:20px;background:#cfcfcf"></div>
<svg class="i" style="left:368px;top:166px" width="32" height="38" viewBox="0 0 32 38">
 <defs><linearGradient id="gRep" x1="0" y1="0" x2="0" y2="1"><stop offset="0" stop-color="#fbfcff"/><stop offset="1" stop-color="#e8ecf6"/></linearGradient>
 <linearGradient id="gRepH" x1="0" y1="0" x2="0" y2="1"><stop offset="0" stop-color="#7ab8e8"/><stop offset="0.5" stop-color="#aad8f4"/><stop offset="1" stop-color="#6aa8e0"/></linearGradient>
 <linearGradient id="gBarB" x1="0" y1="0" x2="1" y2="0"><stop offset="0" stop-color="#5aa0d8"/><stop offset="0.5" stop-color="#a8d8f4"/><stop offset="1" stop-color="#5a9ad4"/></linearGradient>
 <linearGradient id="gBarO" x1="0" y1="0" x2="1" y2="0"><stop offset="0" stop-color="#ec9858"/><stop offset="0.5" stop-color="#fcd8b0"/><stop offset="1" stop-color="#e88e50"/></linearGradient></defs>
 <rect x="0.8" y="0.8" width="30" height="36.4" fill="url(#gRep)" stroke="#aab6dc" stroke-width="1.3"/>
 <rect x="5" y="4" width="21" height="6.5" rx="0.8" fill="url(#gRepH)" stroke="#6a9ed4" stroke-width="0.6"/>
 <path d="M5 13 H26" stroke="#c0a0a0" stroke-width="0.6"/>
 <path d="M5 15.5 H17 M5 18 H17 M5 20.5 H13 M5 23 H13 M5 25.5 H13 M5 28 H13 M5 30.5 H13 M5 33 H13" stroke="#a8b8d4" stroke-width="0.9"/>
 <rect x="14" y="20" width="5.5" height="13.5" rx="1.5" fill="url(#gBarB)" stroke="#4a88c8" stroke-width="0.5"/>
 <rect x="20" y="15" width="5.8" height="18.5" rx="1" fill="url(#gBarO)" stroke="#d88048" stroke-width="0.5"/>
</svg>
<div class="t" style="left:409.4px;top:179.07px;font-size:14.8px;color:#2f2f3a">Извештаји</div>
<svg class="i" style="left:485px;top:183.5px" width="7" height="4" viewBox="0 0 7 4"><path d="M0 0 H7 L3.5 4 Z" fill="#333"/></svg>
<svg class="i" style="left:505px;top:169px" width="35" height="35" viewBox="0 0 35 35">
 <defs><radialGradient id="gAct" cx="0.45" cy="0.3" r="0.75"><stop offset="0" stop-color="#d8eca8"/><stop offset="1" stop-color="#7cb446"/></radialGradient></defs>
 <circle cx="17.5" cy="17.5" r="17" fill="url(#gAct)" stroke="#8ab85a" stroke-width="0.8"/>
 <path d="M9.5 13.5 H17 V8 L27 17.5 L17 27 V21.5 H9.5 Z" fill="#f2f6fa" stroke="#9ab87a" stroke-width="0.8"/>
</svg>
<div class="t" style="left:547.5px;top:178.46px;font-size:15.4px;color:#2f2f3a">Акције</div>
<svg class="i" style="left:598px;top:183.5px" width="7" height="4" viewBox="0 0 7 4"><path d="M0 0 H7 L3.5 4 Z" fill="#333"/></svg>
<div class="a" style="left:616px;top:164px;width:1px;height:44px;background:#a8a8a8"></div>
<svg class="i" style="left:624px;top:167px" width="38" height="38" viewBox="0 0 38 38">
 <defs><linearGradient id="gClk" x1="0" y1="0" x2="0.4" y2="1"><stop offset="0" stop-color="#f4a8a8"/><stop offset="1" stop-color="#d46060"/></linearGradient>
 <radialGradient id="gFace" cx="0.4" cy="0.35" r="0.7"><stop offset="0" stop-color="#ffffff"/><stop offset="1" stop-color="#e4e8f0"/></radialGradient></defs>
 <circle cx="19" cy="19" r="18.2" fill="url(#gClk)" stroke="#c85a5a" stroke-width="0.8"/>
 <circle cx="19" cy="19" r="14.6" fill="#c86a6a"/>
 <circle cx="19" cy="19" r="13.8" fill="url(#gFace)"/>
 <path d="M19 19 H8" stroke="#e04848" stroke-width="1.1"/>
 <path d="M19 19 L27.5 10 M19 19 V30.5" stroke="#4a5464" stroke-width="1.3"/>
 <circle cx="19" cy="19" r="1.5" fill="#4a5464"/>
 <g fill="#9a9aaa"><circle cx="19" cy="7.5" r="0.7"/><circle cx="30.5" cy="19" r="0.7"/><circle cx="7.5" cy="19" r="0.7"/><circle cx="19" cy="30.5" r="0.7"/><circle cx="13" cy="9" r="0.5"/><circle cx="25" cy="29" r="0.5"/><circle cx="13" cy="29" r="0.5"/><circle cx="29" cy="13" r="0.5"/><circle cx="9" cy="13" r="0.5"/><circle cx="29" cy="25" r="0.5"/></g>
</svg>
<svg class="i" style="left:1407px;top:178.5px" width="17" height="17"><use href="#smallC"/></svg>
<div class="a" style="left:347px;top:216px;width:1085px;height:393px;border:1px solid #d2d2d2"></div>
<div class="t" style="left:357px;top:232.95px;font-size:14px;color:#b9b9b9">Превуците колону која иде овде да бисте груписали по њој</div>
<div class="a" style="left:348px;top:260px;width:1083px;height:1px;background:#c8c8c8"></div>
<div class="a" style="left:348px;top:260px;width:1040px;height:2px;background:#b4b4b4"></div>
<div class="a" style="left:348px;top:262px;width:1040px;height:42px;background:#f5f5f5"></div>
<div class="a" style="left:348px;top:262px;width:1px;height:345px;background:#bcbcbc"></div>
<div class="a" style="left:362px;top:262px;width:1px;height:261px;background:#cdcdcd"></div>
<div class="a" style="left:558px;top:262px;width:1px;height:42px;background:#cdcdcd"></div>
<div class="a" style="left:707px;top:262px;width:1px;height:42px;background:#cdcdcd"></div>
<div class="a" style="left:859px;top:262px;width:1px;height:42px;background:#cdcdcd"></div>
<div class="a" style="left:995px;top:262px;width:1px;height:42px;background:#cdcdcd"></div>
<div class="a" style="left:1100px;top:262px;width:1px;height:42px;background:#cdcdcd"></div>
<div class="a" style="left:1262px;top:262px;width:1px;height:42px;background:#cdcdcd"></div>
<div class="a" style="left:1387px;top:262px;width:1px;height:261px;background:#c4c4c4"></div>
<div class="a" style="left:348px;top:304px;width:1040px;height:1px;background:#c4c4c4"></div>
<div class="t" style="left:364.5px;top:276.85px;font-size:14px;color:#3a3f4a">Статус</div>
<div class="t" style="left:560.5px;top:276.85px;font-size:14px;color:#3a3f4a">Менаџер</div>
<div class="t" style="left:709.5px;top:276.85px;font-size:14px;color:#3a3f4a">Број уговора</div>
<div class="t" style="left:997px;top:276.85px;font-size:14px;color:#3a3f4a">Клијент</div>
<div class="t" style="left:1103.5px;top:276.85px;font-size:14px;color:#3a3f4a">% Стопа</div>
<div class="t" style="left:862px;top:267.65px;font-size:14px;color:#3a3f4a">Датум</div>
<div class="t" style="left:862px;top:284.15px;font-size:14px;color:#3a3f4a">договора</div>
<div class="t" style="left:1264px;top:267.65px;font-size:14px;color:#3a3f4a">Кредитни</div>
<div class="t" style="left:1264px;top:284.15px;font-size:14px;color:#3a3f4a">дуг</div>
<svg class="i" style="left:528px;top:273px" width="20" height="20"><use href="#filt"/></svg>
<svg class="i" style="left:677px;top:273px" width="20" height="20"><use href="#filt"/></svg>
<svg class="i" style="left:829px;top:273px" width="20" height="20"><use href="#filt"/></svg>
<svg class="i" style="left:966px;top:273px" width="20" height="20"><use href="#filt"/></svg>
<svg class="i" style="left:1071px;top:273px" width="20" height="20"><use href="#filt"/></svg>
<svg class="i" style="left:1233px;top:273px" width="20" height="20"><use href="#filt"/></svg>
<svg class="i" style="left:1357px;top:273px" width="20" height="20"><use href="#filt"/></svg>
<div class="a" style="left:349px;top:305px;width:13px;height:42px;background:#f5f5f5"></div>
<div class="a" style="left:363px;top:305px;width:1024px;height:42px;background:#ffd0d0"></div>
<div class="a" style="left:349px;top:347px;width:1038px;height:1px;background:#c4c4c4"></div>
<div class="t" style="left:398px;top:319.15px;font-size:14px;color:#1a1a1a">Истекло</div>
<div class="t" style="left:561px;top:319.57px;font-size:13.5px;color:#1a1a1a">Запослени 1</div>
<div class="t" style="left:710px;top:319.15px;font-size:14px;color:#1a1a1a">0008</div>
<div class="t" style="left:862px;top:319.15px;font-size:14px;color:#1a1a1a">06.11.2021</div>
<div class="t" style="left:998px;top:319.15px;font-size:14px;color:#1a1a1a">Клијент 1</div>
<div class="t" style="left:1104px;top:319.15px;font-size:14px;color:#1a1a1a">0,5% дневно</div>
<div class="t" style="right:68.5px;top:319.15px;font-size:14px;text-align:right;color:#1a1a1a">50 000.00</div>
<div class="a" style="left:349px;top:348px;width:13px;height:43px;background:#f5f5f5"></div>
<div class="a" style="left:363px;top:348px;width:1024px;height:43px;background:#dcf9e2"></div>
<div class="a" style="left:349px;top:391px;width:1038px;height:1px;background:#c4c4c4"></div>
<div class="t" style="left:398px;top:363.57px;font-size:13.5px;color:#bdbdbd">Имплементирано</div>
<div class="t" style="left:561px;top:363.57px;font-size:13.5px;color:#bdbdbd">Запослени 1</div>
<div class="t" style="left:710px;top:363.15px;font-size:14px;color:#bdbdbd">0012</div>
<div class="t" style="left:862px;top:363.15px;font-size:14px;color:#bdbdbd">18.02.2021</div>
<div class="t" style="left:998px;top:363.15px;font-size:14px;color:#bdbdbd">Клијент 5</div>
<div class="t" style="left:1104px;top:363.57px;font-size:13.5px;color:#bdbdbd">10% месечно</div>
<div class="t" style="right:68.5px;top:363.15px;font-size:14px;text-align:right;color:#bdbdbd">10 000.00</div>
<div class="a" style="left:349px;top:392px;width:13px;height:43px;background:#f5f5f5"></div>
<div class="a" style="left:363px;top:392px;width:1024px;height:43px;background:#d7effc"></div>
<div class="a" style="left:349px;top:435px;width:1038px;height:1px;background:#c4c4c4"></div>
<div class="t" style="left:398px;top:407.57px;font-size:13.5px;color:#bdbdbd">Имплементирано</div>
<div class="t" style="left:561px;top:407.57px;font-size:13.5px;color:#bdbdbd">Запослени 1</div>
<div class="t" style="left:710px;top:407.15px;font-size:14px;color:#bdbdbd">0013</div>
<div class="t" style="left:862px;top:407.15px;font-size:14px;color:#bdbdbd">19.02.2021</div>
<div class="t" style="left:998px;top:407.15px;font-size:14px;color:#bdbdbd">Клијент 3</div>
<div class="t" style="left:1104px;top:407.57px;font-size:13.5px;color:#bdbdbd">10% месечно</div>
<div class="t" style="right:68.5px;top:407.15px;font-size:14px;text-align:right;color:#bdbdbd">30 000.00</div>
<div class="a" style="left:349px;top:436px;width:13px;height:43px;background:#f5f5f5"></div>
<div class="a" style="left:363px;top:436px;width:1024px;height:43px;background:#ffd0d0"></div>
<div class="a" style="left:349px;top:479px;width:1038px;height:1px;background:#c4c4c4"></div>
<div class="t" style="left:398px;top:451.15px;font-size:14px;color:#1a1a1a">Истекло</div>
<div class="t" style="left:561px;top:451.57px;font-size:13.5px;color:#1a1a1a">Запослени 1</div>
<div class="t" style="left:710px;top:451.15px;font-size:14px;color:#1a1a1a">0010</div>
<div class="t" style="left:862px;top:451.15px;font-size:14px;color:#1a1a1a">07.11.2020</div>
<div class="t" style="left:998px;top:451.15px;font-size:14px;color:#1a1a1a">Клијент 2</div>
<div class="t" style="left:1104px;top:451.15px;font-size:14px;color:#1a1a1a">0,5% дневно</div>
<div class="t" style="right:68.5px;top:451.15px;font-size:14px;text-align:right;color:#1a1a1a">200.00</div>
<div class="a" style="left:349px;top:480px;width:13px;height:43px;background:#f5f5f5"></div>
<div class="a" style="left:363px;top:480px;width:1024px;height:43px;background:#ffff80"></div>
<div class="a" style="left:349px;top:523px;width:1038px;height:1px;background:#c4c4c4"></div>
<div class="t" style="left:398px;top:495.57px;font-size:13.5px;color:#1a1a1a">Новац није издат</div>
<div class="t" style="left:561px;top:495.57px;font-size:13.5px;color:#1a1a1a">Запослени 1</div>
<div class="t" style="left:710px;top:495.15px;font-size:14px;color:#1a1a1a">0011</div>
<div class="t" style="left:862px;top:495.15px;font-size:14px;color:#1a1a1a">09.12.2020</div>
<div class="t" style="left:998px;top:495.15px;font-size:14px;color:#1a1a1a">Клијент 4</div>
<div class="t" style="left:1104px;top:495.57px;font-size:13.5px;color:#1a1a1a">10% месечно</div>
<div class="t" style="right:68.5px;top:495.15px;font-size:14px;text-align:right;color:#1a1a1a">0.00</div>
<div class="a" style="left:363px;top:305px;width:1024px;height:43px;border:1px dotted #2a3a30"></div>
<svg class="i" style="left:353px;top:322px" width="5" height="9" viewBox="0 0 5 9"><path d="M0 0 L5 4.5 L0 9 Z" fill="#555"/></svg>
<div class="a" style="left:348px;top:561px;width:1040px;height:1px;background:#c8c8c8"></div>
<div class="a" style="left:349px;top:562px;width:1038px;height:44px;background:#f5f5f5"></div>
<div class="a" style="left:348px;top:606px;width:1040px;height:2px;background:#bdbdbd"></div>
<div class="a" style="left:1387px;top:561px;width:1px;height:46px;background:#c8c8c8"></div>
<div class="a" style="left:1266px;top:566px;width:118px;height:37px;background:#fff;border:1px solid #d4d4d4"></div>
<div class="t" style="right:77px;top:578.15px;font-size:14px;text-align:right;color:#3a3a3a">90 200.00</div>
<div class="a" style="left:879px;top:612px;width:1px;height:1px;background:#9a9a9a"></div>
<div class="a" style="left:881px;top:612px;width:1px;height:1px;background:#9a9a9a"></div>
<div class="a" style="left:883px;top:612px;width:1px;height:1px;background:#9a9a9a"></div>
<div class="a" style="left:885px;top:612px;width:1px;height:1px;background:#9a9a9a"></div>
<div class="a" style="left:887px;top:612px;width:1px;height:1px;background:#9a9a9a"></div>
<div class="a" style="left:889px;top:612px;width:1px;height:1px;background:#9a9a9a"></div>
<div class="a" style="left:891px;top:612px;width:1px;height:1px;background:#9a9a9a"></div>
<div class="a" style="left:893px;top:612px;width:1px;height:1px;background:#9a9a9a"></div>
<div class="a" style="left:895px;top:612px;width:1px;height:1px;background:#9a9a9a"></div>
<div class="a" style="left:897px;top:612px;width:1px;height:1px;background:#9a9a9a"></div>
<!-- tabs -->
<div class="a" style="left:348px;top:618px;width:88px;height:47px;background:#fff;border-right:1px solid #c8c8c8;border-left:1px solid #d0d0d0"></div>
<div class="a" style="left:348px;top:618px;width:88px;height:3px;background:#1e96f0"></div>
<svg class="i" style="left:363px;top:632px" width="15" height="18"><use href="#book"/></svg>
<div class="t" style="left:387.5px;top:635.79px;font-size:13.6px;color:#1e96f0">Залог</div>
<div class="a" style="left:436px;top:621px;width:153px;height:42px;background:#f4f4f4;border:1px solid #cacaca;border-bottom:none"></div>
<svg class="i" style="left:449px;top:632px" width="15" height="18"><use href="#book"/></svg>
<div class="t" style="left:473.5px;top:635.79px;font-size:13.6px;color:#5f6470">Износ позајмице</div>
<div class="a" style="left:588px;top:621px;width:134px;height:42px;background:#f4f4f4;border:1px solid #cacaca;border-bottom:none"></div>
<svg class="i" style="left:601px;top:632px" width="15" height="18"><use href="#book"/></svg>
<div class="t" style="left:625.5px;top:635.79px;font-size:13.6px;color:#5f6470">Припадности</div>
<div class="a" style="left:721px;top:621px;width:146px;height:42px;background:#f4f4f4;border:1px solid #cacaca;border-bottom:none"></div>
<svg class="i" style="left:734px;top:632px" width="15" height="18"><use href="#book"/></svg>
<div class="t" style="left:758.5px;top:635.79px;font-size:13.6px;color:#5f6470">Новчане казне</div>
<div class="a" style="left:866px;top:621px;width:106px;height:42px;background:#f4f4f4;border:1px solid #cacaca;border-bottom:none"></div>
<svg class="i" style="left:879px;top:632px" width="15" height="18"><use href="#book"/></svg>
<div class="t" style="left:903.5px;top:635.79px;font-size:13.6px;color:#5f6470">Отплата</div>
<div class="a" style="left:971px;top:621px;width:113px;height:42px;background:#f4f4f4;border:1px solid #cacaca;border-bottom:none"></div>
<svg class="i" style="left:984px;top:632px" width="15" height="18"><use href="#book"/></svg>
<div class="t" style="left:1008.5px;top:635.79px;font-size:13.6px;color:#5f6470">Трошкови</div>
<div class="a" style="left:1083px;top:621px;width:102px;height:42px;background:#f4f4f4;border:1px solid #cacaca;border-bottom:none"></div>
<svg class="i" style="left:1096px;top:632px" width="15" height="18"><use href="#book"/></svg>
<div class="t" style="left:1120.5px;top:635.79px;font-size:13.6px;color:#5f6470">Продаја</div>
<div class="a" style="left:1184px;top:621px;width:121px;height:42px;background:#f4f4f4;border:1px solid #cacaca;border-bottom:none"></div>
<svg class="i" style="left:1197px;top:632px" width="15" height="18"><use href="#book"/></svg>
<div class="t" style="left:1221.5px;top:635.79px;font-size:13.6px;color:#5f6470">Документи</div>
<div class="a" style="left:1304px;top:621px;width:88px;height:42px;background:#f4f4f4;border:1px solid #cacaca;border-bottom:none"></div>
<svg class="i" style="left:1317px;top:632px" width="15" height="18"><use href="#book"/></svg>
<div class="t" style="left:1341.5px;top:635.79px;font-size:13.6px;color:#5f6470">Посао</div>
<!-- tab page -->
<div class="a" style="left:347px;top:663px;width:1085px;height:216px;border:1px solid #cdcdcd;border-top:none;border-bottom:2px solid #bcbcbc"></div>
<div class="a" style="left:436px;top:663px;width:996px;height:1px;background:#cdcdcd"></div>
<div class="a" style="left:349px;top:665px;width:1081px;height:211px;border:1px solid #d6d6d6"></div>
<div class="t" style="left:360px;top:682.15px;font-size:14px;color:#b9b9b9">Превуците колону која иде овде да бисте груписали по њој</div>
<div class="a" style="left:350px;top:709px;width:1079px;height:1px;background:#cdcdcd"></div>
<div class="a" style="left:350px;top:709px;width:838px;height:2px;background:#b4b4b4"></div>
<div class="a" style="left:350px;top:711px;width:838px;height:41px;background:#f5f5f5"></div>
<div class="a" style="left:350px;top:711px;width:1px;height:163px;background:#bcbcbc"></div>
<div class="a" style="left:364px;top:711px;width:1px;height:85px;background:#cdcdcd"></div>
<div class="a" style="left:512px;top:711px;width:1px;height:41px;background:#cdcdcd"></div>
<div class="a" style="left:724px;top:711px;width:1px;height:41px;background:#cdcdcd"></div>
<div class="a" style="left:937px;top:711px;width:1px;height:41px;background:#cdcdcd"></div>
<div class="a" style="left:1187px;top:711px;width:1px;height:163px;background:#c4c4c4"></div>
<div class="a" style="left:350px;top:752px;width:838px;height:1px;background:#c8c8c8"></div>
<div class="t" style="left:367px;top:725.15px;font-size:14px;color:#3a3f4a">Статус</div>
<div class="t" style="left:514.5px;top:725.15px;font-size:14px;color:#3a3f4a">Објекат колатерала</div>
<div class="t" style="left:726.5px;top:725.15px;font-size:14px;color:#3a3f4a">Износ процене</div>
<div class="t" style="left:939.5px;top:725.15px;font-size:14px;color:#3a3f4a">Проналажење колатерала</div>
<svg class="i" style="left:482px;top:721.5px" width="20" height="20"><use href="#filt"/></svg>
<svg class="i" style="left:695px;top:721.5px" width="20" height="20"><use href="#filt"/></svg>
<svg class="i" style="left:907px;top:721.5px" width="20" height="20"><use href="#filt"/></svg>
<svg class="i" style="left:1157px;top:721.5px" width="20" height="20"><use href="#filt"/></svg>
<div class="a" style="left:351px;top:753px;width:13px;height:42px;background:#f5f5f5"></div>
<div class="a" style="left:365px;top:753px;width:822px;height:42px;background:#b0fc62"></div>
<div class="a" style="left:350px;top:795px;width:838px;height:1px;background:#c4c4c4"></div>
<svg class="i" style="left:355px;top:770px" width="5" height="9" viewBox="0 0 5 9"><path d="M0 0 L5 4.5 L0 9 Z" fill="#555"/></svg>
<div class="t" style="left:400.5px;top:767.75px;font-size:14px;color:#1a1a1a">Обећана</div>
<div class="t" style="right:518.5px;top:767.75px;font-size:14px;text-align:right;color:#1a1a1a">150 000.00</div>
<div class="t" style="left:938.8px;top:767.75px;font-size:14px;color:#1a1a1a">код клијента</div>
<div class="a" style="left:350px;top:829px;width:838px;height:1px;background:#c8c8c8"></div>
<div class="a" style="left:351px;top:830px;width:836px;height:44px;background:#f5f5f5"></div>
<div class="a" style="left:350px;top:874px;width:838px;height:1px;background:#c4c4c4"></div>
<div class="a" style="left:728px;top:833px;width:207px;height:38px;background:#fff;border:1px solid #d4d4d4"></div>
<div class="t" style="right:526px;top:844.65px;font-size:14px;text-align:right;color:#3a3a3a">150 000.00</div>
<div id="bottom"></div>

</body></html>
